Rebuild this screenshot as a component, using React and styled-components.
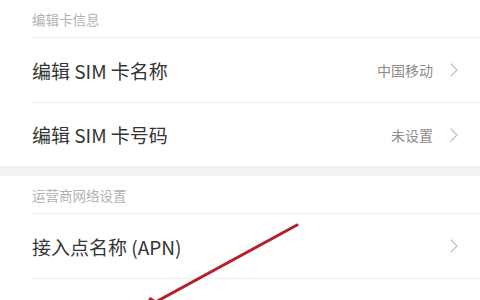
import React from 'react'
import styled, { createGlobalStyle } from 'styled-components'

const GlobalStyle = createGlobalStyle`
    html, body {
        margin: 0;
        padding: 0;
        background: #ffffff;
        overflow: hidden;
    }
    body {
        font-family: "Noto Sans CJK SC", "Noto Sans", sans-serif;
    }
`

const Page = styled.div`
    position: relative;
    width: 480px;
    height: 300px;
    overflow: hidden;
    background: #ffffff;
`

const Section = styled.section`
    display: flex;
    flex-direction: column;
    background: #ffffff;
`

const SectionGap = styled.div`
    height: 10px;
    background: #f2f2f2;
`

const SectionTitle = styled.div`
    display: flex;
    align-items: center;
    height: 37px;
    margin-left: 32px;
    border-bottom: 1px solid #ededed;
    font-size: 13.5px;
    color: #b2b2b2;
`

const Row = styled.div`
    display: flex;
    align-items: center;
    height: ${p => (p.$last ? 63 : 64)}px;
    margin-left: 32px;
    padding-right: 22px;
    border-bottom: ${p => (p.$last ? 'none' : '1px solid #ededed')};
`

const RowLabel = styled.div`
    flex: 1;
    font-size: 19px;
    color: #353535;
`

const RowValue = styled.div`
    font-size: 14px;
    color: #8c8c8c;
    margin-right: 17px;
`

const Chevron = styled.svg`
    width: 8px;
    height: 14px;
    flex: none;
`

const Arrow = styled.svg`
    position: absolute;
    left: 0;
    top: 0;
    width: 480px;
    height: 300px;
    pointer-events: none;
`

function Arrowhead() {
    return (
        <Chevron viewBox="0 0 8 14">
            <path d="M1 1 L7 7 L1 13" fill="none" stroke="#c4c4c4" strokeWidth="1.4" strokeLinecap="round" strokeLinejoin="round" />
        </Chevron>
    )
}

function SettingRow({ label, value, last }) {
    return (
        <Row $last={last}>
            <RowLabel>{label}</RowLabel>
            {value && <RowValue>{value}</RowValue>}
            <Arrowhead />
        </Row>
    )
}

export default function App() {
    return (
        <Page>
            <GlobalStyle />
            <Section>
                <SectionTitle>编辑卡信息</SectionTitle>
                <SettingRow label="编辑 SIM 卡名称" value="中国移动" />
                <SettingRow label="编辑 SIM 卡号码" value="未设置" last />
            </Section>
            <SectionGap />
            <Section>
                <SectionTitle>运营商网络设置</SectionTitle>
                <SettingRow label="接入点名称 (APN)" />
                <SettingRow label="首选网络类型" />
            </Section>
            <Arrow viewBox="0 0 480 300">
                <line x1="297" y1="225" x2="152" y2="304" stroke="#b3222a" strokeWidth="3" strokeLinecap="round" />
                <path d="M136 318 L150 297 L164 305 Z" fill="#b3222a" />
            </Arrow>
        </Page>
    )
}
